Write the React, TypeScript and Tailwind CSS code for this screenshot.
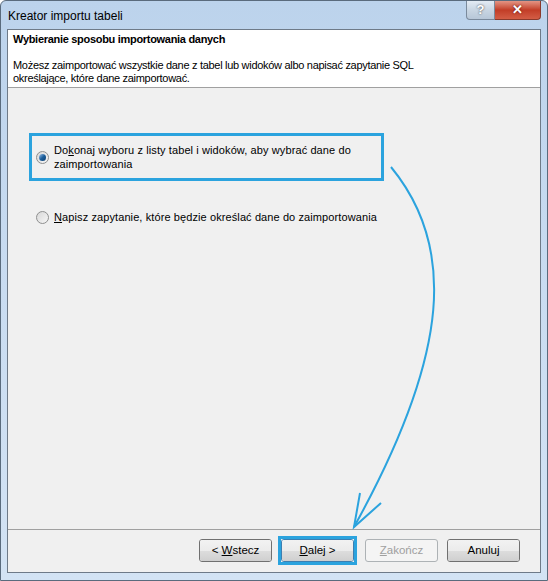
import React from 'react';

const font = { fontFamily: '"Liberation Sans", Arial, sans-serif' };

const Radio = ({ checked }: { checked?: boolean }) => (
    <span className="relative inline-flex h-[13px] w-[13px] shrink-0 items-center justify-center rounded-full border border-[#8e8f8f] bg-gradient-to-br from-[#d8d8d8] to-[#f6f6f6]">
        {checked && (
            <span className="h-[7px] w-[7px] rounded-full bg-gradient-to-br from-[#9cc4e8] via-[#1b5f9c] to-[#0d3d6e]" />
        )}
    </span>
);

const Button = ({ children, disabled, isDefault }: { children: React.ReactNode; disabled?: boolean; isDefault?: boolean }) => {
    if (disabled) {
        return (
            <div className="flex h-[23px] w-[73px] items-center justify-center rounded-[3px] border border-[#adb2b5] bg-[#f4f4f4] text-[11.5px] text-[#a0a0a0]">
                {children}
            </div>
        );
    }
    return (
        <div className={`flex h-[23px] w-[73px] flex-col overflow-hidden rounded-[3px] border ${isDefault ? 'border-[#3c7fb1]' : 'border-[#707070]'}`}>
            <div className="relative flex h-full flex-col">
                <div className="h-1/2 bg-gradient-to-b from-[#f2f2f2] to-[#ebebeb]" />
                <div className="h-1/2 bg-gradient-to-b from-[#dddddd] to-[#cfcfcf]" />
                <div className="absolute inset-0 flex items-center justify-center text-[11.5px] text-black">{children}</div>
            </div>
        </div>
    );
};

const Arrow = () => (
    <svg className="pointer-events-none absolute left-0 top-0" width="548" height="581">
        <path d="M391 167 C 455 245, 452 350, 354 527" fill="none" stroke="#2ba3de" strokeWidth="2" />
        <path d="M360 493 L354 527 L381 503" fill="none" stroke="#2ba3de" strokeWidth="2" />
    </svg>
);

export default function App() {
    return (
        <div className="relative h-[581px] w-[548px] overflow-hidden" style={font}>
            <div className="flex h-full w-full flex-col rounded-t-[6px] border border-[#5a6b7d] bg-gradient-to-b from-[#bcd3ec] via-[#c9dcf1] to-[#d3e3f4]">
                {/* title bar */}
                <div className="flex h-[28px] shrink-0 items-start justify-between">
                    <span className="pl-[7px] pt-[6px] text-[12px] text-black">Kreator importu tabeli</span>
                    <div className="mr-[6px] flex">
                        <div className="flex h-[19px] w-[29px] items-center justify-center rounded-bl-[4px] border border-t-0 border-[#7a8a9c] bg-gradient-to-b from-[#e3ebf4] via-[#c9d6e3] to-[#b7c7d8] text-[13px] font-bold text-white [text-shadow:0_0_2px_#333]">
                            ?
                        </div>
                        <div className="flex h-[19px] w-[46px] items-center justify-center rounded-br-[4px] border border-l-0 border-t-0 border-[#8a3a2c] bg-gradient-to-b from-[#e39484] via-[#c23d27] to-[#d35d45] text-[13px] font-bold text-white [text-shadow:0_0_2px_#500]">
                            ✕
                        </div>
                    </div>
                </div>
                {/* client area */}
                <div className="mx-[6px] flex flex-1 flex-col border border-[#6e7a88] bg-[#f0f0f0]">
                    <div className="flex h-[58px] flex-col border-b border-[#a0a0a0] bg-white px-[5px] pt-[3px] text-[11px] leading-[13px] tracking-[-0.3px] text-black">
                        <span className="font-bold">Wybieranie sposobu importowania danych</span>
                        <span className="mt-[13px]">Możesz zaimportować wszystkie dane z tabel lub widoków albo napisać zapytanie SQL</span>
                        <span>określające, które dane zaimportować.</span>
                    </div>
                    <div className="flex flex-1 flex-col pl-[21px] pt-[45px] text-[11px] leading-[14px] tracking-[0.1px] text-black">
                        <div className="flex h-[48px] w-[355px] items-center gap-[5px] border-[3px] border-[#2ba3de] pl-[4px]">
                            <Radio checked />
                            <span>
                                Do<u>k</u>onaj wyboru z listy tabel i widoków, aby wybrać dane do
                                <br />
                                zaimportowania
                            </span>
                        </div>
                        <div className="mt-[29px] flex items-center gap-[5px] pl-[7px]">
                            <Radio />
                            <span>
                                <u>N</u>apisz zapytanie, które będzie określać dane do zaimportowania
                            </span>
                        </div>
                    </div>
                    <div className="flex h-[43px] items-center justify-end border-t border-[#a0a0a0] pr-[20px] pb-[1px]">
                        <Button>
                            &lt;{'\u00a0'}<u>W</u>stecz
                        </Button>
                        <div className="ml-[6px] border-[3px] border-[#2ba3de]">
                            <Button isDefault>
                                <u>D</u>alej &gt;
                            </Button>
                        </div>
                        <div className="ml-[8px]">
                            <Button disabled>
                                <u>Z</u>akończ
                            </Button>
                        </div>
                        <div className="ml-[9px]">
                            <Button>Anuluj</Button>
                        </div>
                    </div>
                </div>
                <div className="h-[7px] shrink-0" />
            </div>
            <Arrow />
        </div>
    );
}
